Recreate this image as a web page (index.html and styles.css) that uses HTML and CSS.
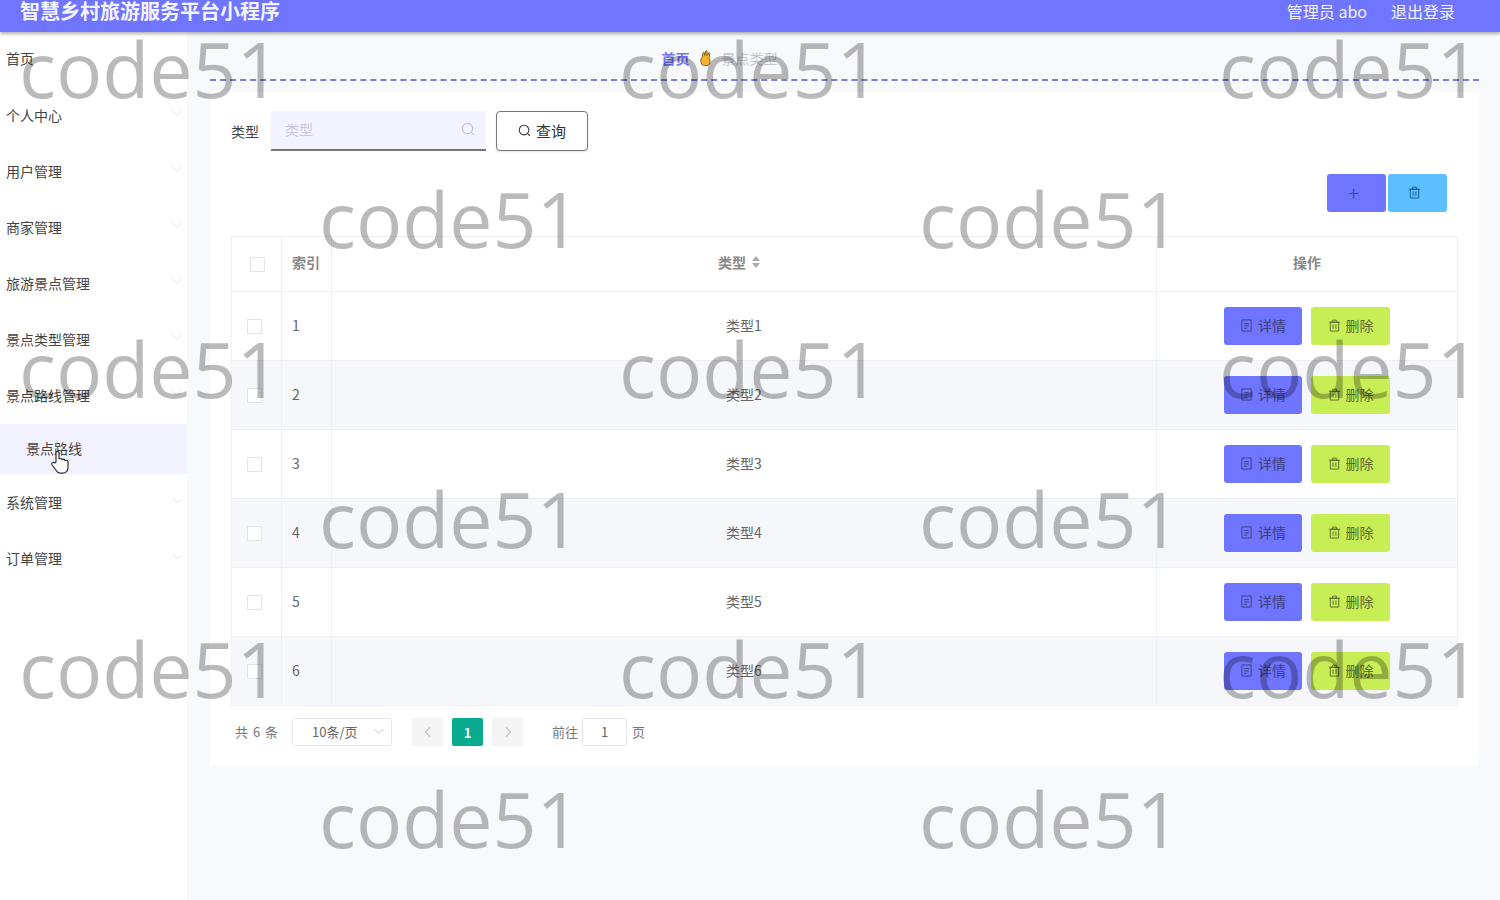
FILE: index.html
```html
<!DOCTYPE html>
<html lang="zh-CN">
<head>
    <meta charset="UTF-8">
    <meta name="viewport" content="width=device-width, initial-scale=1.0">
    <title>智慧乡村旅游服务平台小程序</title>
    <link rel="stylesheet" href="styles.css">
</head>
<body>
    <svg class="icon-defs" width="0" height="0">
        <symbol id="i-search" viewBox="0 0 14 14"><circle cx="6.500" cy="6.500" r="5.200" fill="none" stroke="currentColor" stroke-width="1.100"/><path d="M10.400 10.400l2.400 2.400" stroke="currentColor" stroke-width="1.100"/></symbol>
        <symbol id="i-trash" viewBox="0 0 14 14"><path d="M2.500 3.500h9v9.500h-9zM1 3.500h12M5 3.500V1.200h4v2.300M5.500 6v4.500M8.500 6v4.500" fill="none" stroke="currentColor" stroke-width="1"/></symbol>
        <symbol id="i-doc" viewBox="0 0 14 14"><path d="M2 1h10v12H2zM4.500 5h5M4.500 7.500h5M4.500 10h3" fill="none" stroke="currentColor" stroke-width="1"/></symbol>
        <symbol id="i-down" viewBox="0 0 12 12"><path d="M1.500 4l4.500 4.500L10.500 4" fill="none" stroke="currentColor" stroke-width="1"/></symbol>
    </svg>

    <!-- 顶部 -->
    <header class="topbar">
        <div class="app-title">智慧乡村旅游服务平台小程序</div>
        <div class="top-right">
            <span>管理员 abo</span>
            <span>退出登录</span>
        </div>
    </header>

    <div class="layout">
        <!-- 左侧菜单 -->
        <aside class="sidebar">
            <div class="menu-item menu-home">首页</div>
            <div class="menu-item">个人中心<svg class="chevron"><use href="#i-down"/></svg></div>
            <div class="menu-item">用户管理<svg class="chevron"><use href="#i-down"/></svg></div>
            <div class="menu-item">商家管理<svg class="chevron"><use href="#i-down"/></svg></div>
            <div class="menu-item">旅游景点管理<svg class="chevron"><use href="#i-down"/></svg></div>
            <div class="menu-item">景点类型管理<svg class="chevron"><use href="#i-down"/></svg></div>
            <div class="menu-item">景点路线管理<svg class="chevron"><use href="#i-down"/></svg></div>
            <div class="menu-sub">景点路线</div>
            <div class="menu-item">系统管理<svg class="chevron"><use href="#i-down"/></svg></div>
            <div class="menu-item">订单管理<svg class="chevron"><use href="#i-down"/></svg></div>
        </aside>

        <main class="content">
            <div class="breadcrumb">
                <span class="crumb-home">首页</span>
                <svg class="crumb-hand" viewBox="0 0 14 16" width="12" height="16" preserveAspectRatio="none"><path d="M3 15c-1.500-1-2-3-2-5 0-1 .5-2 1.500-2.500L3.500 3c.2-1 1.500-1 1.700 0l.5 2.500L6.500 1.500c.2-1 1.600-1 1.700 0l.1 4L10 3c.5-.8 1.600-.3 1.400.6L10.500 8c1 1 1.500 2.500 1 4.500-.4 2-1.500 3-3.500 3H5c-.8 0-1.400-.2-2-.5z" fill="#f5b331" stroke="#7a5a10" stroke-width="1"/></svg>
                <span class="crumb-current">景点类型</span>
            </div>

            <section class="card">
                <div class="search-row">
                    <label class="search-label">类型</label>
                    <div class="search-input">
                        <span>类型</span>
                        <svg class="search-icon"><use href="#i-search"/></svg>
                    </div>
                    <button class="btn-query"><svg class="btn-icon"><use href="#i-search"/></svg>查询</button>
                </div>

                <div class="action-row">
                    <button class="btn-add">+</button>
                    <button class="btn-batch"><svg class="btn-icon"><use href="#i-trash"/></svg></button>
                </div>

                <table class="data-table">
                    <colgroup>
                        <col class="col-check">
                        <col class="col-index">
                        <col>
                        <col class="col-ops">
                    </colgroup>
                    <thead>
                        <tr>
                            <th class="cell-check"><span class="checkbox head-check"></span></th>
                            <th class="cell-index">索引</th>
                            <th>类型<span class="sort-arrows"><i class="arrow-up"></i><i class="arrow-down"></i></span></th>
                            <th>操作</th>
                        </tr>
                    </thead>
                    <tbody>
                        <tr>
                            <td class="cell-check"><span class="checkbox"></span></td>
                            <td class="cell-index">1</td>
                            <td>类型1</td>
                            <td><div class="ops"><button class="btn-detail"><svg class="btn-icon"><use href="#i-doc"/></svg>详情</button><button class="btn-delete"><svg class="btn-icon"><use href="#i-trash"/></svg>删除</button></div></td>
                        </tr>
                        <tr>
                            <td class="cell-check"><span class="checkbox"></span></td>
                            <td class="cell-index">2</td>
                            <td>类型2</td>
                            <td><div class="ops"><button class="btn-detail"><svg class="btn-icon"><use href="#i-doc"/></svg>详情</button><button class="btn-delete"><svg class="btn-icon"><use href="#i-trash"/></svg>删除</button></div></td>
                        </tr>
                        <tr>
                            <td class="cell-check"><span class="checkbox"></span></td>
                            <td class="cell-index">3</td>
                            <td>类型3</td>
                            <td><div class="ops"><button class="btn-detail"><svg class="btn-icon"><use href="#i-doc"/></svg>详情</button><button class="btn-delete"><svg class="btn-icon"><use href="#i-trash"/></svg>删除</button></div></td>
                        </tr>
                        <tr>
                            <td class="cell-check"><span class="checkbox"></span></td>
                            <td class="cell-index">4</td>
                            <td>类型4</td>
                            <td><div class="ops"><button class="btn-detail"><svg class="btn-icon"><use href="#i-doc"/></svg>详情</button><button class="btn-delete"><svg class="btn-icon"><use href="#i-trash"/></svg>删除</button></div></td>
                        </tr>
                        <tr>
                            <td class="cell-check"><span class="checkbox"></span></td>
                            <td class="cell-index">5</td>
                            <td>类型5</td>
                            <td><div class="ops"><button class="btn-detail"><svg class="btn-icon"><use href="#i-doc"/></svg>详情</button><button class="btn-delete"><svg class="btn-icon"><use href="#i-trash"/></svg>删除</button></div></td>
                        </tr>
                        <tr>
                            <td class="cell-check"><span class="checkbox"></span></td>
                            <td class="cell-index">6</td>
                            <td>类型6</td>
                            <td><div class="ops"><button class="btn-detail"><svg class="btn-icon"><use href="#i-doc"/></svg>详情</button><button class="btn-delete"><svg class="btn-icon"><use href="#i-trash"/></svg>删除</button></div></td>
                        </tr>
                    </tbody>
                </table>

                <div class="pagination">
                    <span class="page-total">共 6 条</span>
                    <div class="page-size">10条/页<svg class="size-chevron"><use href="#i-down"/></svg></div>
                    <div class="page-btn page-prev">
                        <svg width="10" height="12" viewBox="0 0 10 12"><path d="M7 1.500L2.500 6 7 10.500" fill="none" stroke="currentColor" stroke-width="1.200"/></svg>
                    </div>
                    <div class="page-btn page-active">1</div>
                    <div class="page-btn page-next">
                        <svg width="10" height="12" viewBox="0 0 10 12"><path d="M3 1.500L7.500 6 3 10.500" fill="none" stroke="currentColor" stroke-width="1.200"/></svg>
                    </div>
                    <span class="page-goto">前往</span>
                    <div class="page-input">1</div>
                    <span class="page-unit">页</span>
                </div>
            </section>
        </main>
    </div>

    <!-- 水印 -->
    <div class="watermark wm-1">code51</div>
    <div class="watermark wm-2">code51</div>
    <div class="watermark wm-3">code51</div>
    <div class="watermark wm-4">code51</div>
    <div class="watermark wm-5">code51</div>
    <div class="watermark wm-6">code51</div>
    <div class="watermark wm-7">code51</div>
    <div class="watermark wm-8">code51</div>
    <div class="watermark wm-9">code51</div>
    <div class="watermark wm-10">code51</div>
    <div class="watermark wm-11">code51</div>
    <div class="watermark wm-12">code51</div>
    <div class="watermark wm-13">code51</div>
    <div class="watermark wm-14">code51</div>
    <div class="watermark wm-15">code51</div>

    <!-- 鼠标指针 -->
    <svg class="hand-cursor" viewBox="0 0 18 26" width="18" height="24" preserveAspectRatio="none"><path d="M5 13V3c0-2 3-2 3 0v7c0-1.500 3-1.500 3 0v1c0-1.500 3-1.500 3 0v1c0-1.300 3-1.300 3 .5V19c0 3-2 6-5 6H9c-2 0-3-1-4-3l-4-6c-1-2 1.500-3.500 3-2z" fill="#fff" stroke="#333" stroke-width="1.200"/></svg>
</body>
</html>
```

FILE: styles.css
```css
* {
    box-sizing: border-box;
}

html, body {
    margin: 0;
    padding: 0;
    height: 900px;
    overflow: hidden;
}

body {
    font-family: "Noto Sans CJK SC", "Noto Sans", sans-serif;
    font-size: 14px;
    color: #444;
    background: #f8f9fb;
    position: relative;
}

.icon-defs {
    position: absolute;
}

button {
    font-family: inherit;
    cursor: pointer;
}

/* 顶部 */
.topbar {
    height: 32px;
    background: #6f75ff;
    color: #fff;
    display: flex;
    justify-content: space-between;
    align-items: flex-start;
    padding: 1px 45px 0 20px;
    box-shadow: 0 2px 3px rgba(0, 0, 0, 0.3);
    position: relative;
    z-index: 2;
}

.app-title {
    font-size: 20px;
    line-height: 20px;
    font-weight: 700;
    opacity: 0.92;
}

.top-right {
    display: flex;
    gap: 24px;
    font-size: 16px;
    line-height: 20px;
    opacity: 0.9;
}

.layout {
    display: flex;
    height: 868px;
}

/* 左侧菜单 */
.sidebar {
    width: 187px;
    background: #fff;
    flex-shrink: 0;
}

.menu-item {
    height: 56px;
    display: flex;
    align-items: center;
    justify-content: space-between;
    padding: 0 4px 2px 6px;
    color: #444;
}

.menu-home {
    padding-bottom: 4px;
}

.chevron {
    width: 12px;
    height: 12px;
    color: #dcdfe6;
    margin-top: -4px;
}

.menu-sub {
    height: 50px;
    margin-bottom: 1px;
    padding: 0 0 3px 26px;
    display: flex;
    align-items: center;
    background: #f3f3ff;
    color: #444;
}

/* 内容 */
.content {
    flex: 1;
    padding: 0 22px 0 23px;
}

.breadcrumb {
    height: 49px;
    border-bottom: 2px dashed #7b7fd8;
    display: flex;
    justify-content: center;
    align-items: center;
    padding: 4px 250px 0 0;
}

.crumb-home {
    color: #6f75ff;
    font-weight: 700;
}

.crumb-hand {
    margin: 0 10px;
}

.crumb-current {
    color: #c0c4cc;
}

.card {
    margin-top: 11px;
    background: #fff;
    height: 674px;
    padding: 19px 21px 0 21px;
}

.search-row {
    display: flex;
    align-items: center;
    height: 40px;
}

.search-label {
    width: 40px;
    flex-shrink: 0;
    padding-bottom: 1px;
}

.search-input {
    width: 215px;
    height: 40px;
    background: #f3f3ff;
    border-bottom: 2px solid #777;
    display: flex;
    align-items: center;
    justify-content: space-between;
    padding: 0 11px 2px 14px;
    color: #c8c8dc;
}

.search-icon {
    width: 14px;
    height: 14px;
    color: #c0c4cc;
}

.btn-query {
    margin-left: 10px;
    width: 92px;
    height: 40px;
    background: #fff;
    border: 1px solid #777;
    border-radius: 4px;
    display: flex;
    align-items: center;
    justify-content: center;
    gap: 5px;
    padding: 0 0 1px 0;
    font-size: 15px;
    color: #333;
    box-shadow: 0 1px 2px rgba(0, 0, 0, 0.12);
}

.btn-icon {
    width: 13px;
    height: 13px;
    flex-shrink: 0;
}

.action-row {
    display: flex;
    justify-content: flex-end;
    gap: 2px;
    margin-top: 23px;
    padding-right: 11px;
}

.btn-add, .btn-batch {
    width: 59px;
    height: 38px;
    border: none;
    border-radius: 3px;
    display: flex;
    align-items: center;
    justify-content: center;
    color: #3c4a80;
    padding: 0 6px 2px 0;
}

.btn-add {
    background: #6f75ff;
    font-size: 20px;
    font-weight: 300;
}

.btn-batch {
    background: #5cbfff;
    color: #1e5c8e;
}

/* 表格 */
.data-table {
    width: 1227px;
    margin-top: 24px;
    border-collapse: collapse;
    table-layout: fixed;
    font-size: 14px;
    color: #666;
}

.col-check {
    width: 50px;
}

.col-index {
    width: 50px;
}

.col-ops {
    width: 301px;
}

.data-table th, .data-table td {
    border: 1px solid #eef0f3;
    text-align: center;
    padding: 0 0 3px 0;
}

.data-table th {
    height: 55px;
    color: #888;
    font-weight: 700;
    padding-bottom: 4px;
}

.data-table td {
    height: 69px;
}

.data-table tbody tr:nth-child(even) td {
    background: #f5f7fb;
}

.data-table .cell-index {
    text-align: left;
    padding-left: 10px;
}

.data-table .cell-check {
    padding-right: 2px;
}

.checkbox {
    display: inline-block;
    width: 15px;
    height: 15px;
    background: #fff;
    border: 1px solid #e2e4e9;
    vertical-align: middle;
    margin-right: 3px;
}

.head-check {
    margin-right: -3px;
}

.sort-arrows {
    display: inline-block;
    width: 10px;
    height: 14px;
    margin: 0 8px 0 6px;
    vertical-align: middle;
    position: relative;
    top: -1px;
}

.arrow-up, .arrow-down {
    display: block;
    width: 0;
    height: 0;
    border-left: 4.500px solid transparent;
    border-right: 4.500px solid transparent;
}

.arrow-up {
    border-bottom: 5px solid #a8abb2;
    margin-bottom: 2px;
}

.arrow-down {
    border-top: 5px solid #a8abb2;
}

.ops {
    display: flex;
    gap: 9px;
    justify-content: flex-start;
    padding-left: 67px;
    position: relative;
    top: 1px;
}

.ops .btn-icon {
    margin-top: 2px;
}

.btn-detail, .btn-delete {
    height: 38px;
    border: none;
    border-radius: 3px;
    display: flex;
    align-items: center;
    justify-content: center;
    gap: 5px;
    font-size: 14px;
    padding: 0 0 2px 0;
}

.btn-detail {
    width: 78px;
    background: #6f75ff;
    color: #3c3f80;
}

.btn-delete {
    width: 79px;
    background: #c8ee55;
    color: #5a6a30;
}

/* 分页 */
.pagination {
    display: flex;
    align-items: center;
    height: 28px;
    margin-top: 12px;
    font-size: 13px;
    color: #777;
}

.page-total {
    margin-left: 4px;
    width: 57px;
    flex-shrink: 0;
    word-spacing: 2px;
    padding-bottom: 2px;
}

.page-size {
    width: 100px;
    height: 28px;
    border: 1px solid #e4e7ed;
    border-radius: 3px;
    display: flex;
    align-items: center;
    justify-content: space-between;
    padding: 0 6px 2px 19px;
    color: #666;
}

.size-chevron {
    width: 12px;
    height: 12px;
    color: #c0c4cc;
}

.page-btn {
    width: 31px;
    height: 28px;
    border-radius: 2px;
    background: #f4f4f5;
    color: #c0c4cc;
    display: flex;
    align-items: center;
    justify-content: center;
}

.page-prev {
    margin-left: 20px;
}

.page-active {
    margin-left: 9px;
    background: #0aab8f;
    color: #fff;
    font-weight: 700;
}

.page-next {
    margin-left: 9px;
}

.page-goto {
    margin-left: 29px;
    padding-bottom: 2px;
}

.page-input {
    margin-left: 4px;
    width: 45px;
    height: 28px;
    border: 1px solid #e4e7ed;
    border-radius: 3px;
    display: flex;
    align-items: center;
    justify-content: center;
    padding-bottom: 2px;
    color: #666;
}

.page-unit {
    margin-left: 5px;
    padding-bottom: 2px;
}

/* 水印 */
.watermark {
    position: absolute;
    font-family: "Open Sans", sans-serif;
    font-size: 77px;
    line-height: 80px;
    color: rgba(0, 0, 0, 0.27);
    white-space: nowrap;
    z-index: 5;
    pointer-events: none;
}

.wm-1 { left: 19px; top: 29px; }
.wm-2 { left: 619px; top: 29px; }
.wm-3 { left: 1219px; top: 29px; }
.wm-4 { left: 319px; top: 179px; }
.wm-5 { left: 919px; top: 179px; }
.wm-6 { left: 19px; top: 329px; }
.wm-7 { left: 619px; top: 329px; }
.wm-8 { left: 1219px; top: 329px; }
.wm-9 { left: 319px; top: 479px; }
.wm-10 { left: 919px; top: 479px; }
.wm-11 { left: 19px; top: 629px; }
.wm-12 { left: 619px; top: 629px; }
.wm-13 { left: 1219px; top: 629px; }
.wm-14 { left: 319px; top: 779px; }
.wm-15 { left: 919px; top: 779px; }

.hand-cursor {
    position: absolute;
    left: 51px;
    top: 450px;
    z-index: 6;
}
```
